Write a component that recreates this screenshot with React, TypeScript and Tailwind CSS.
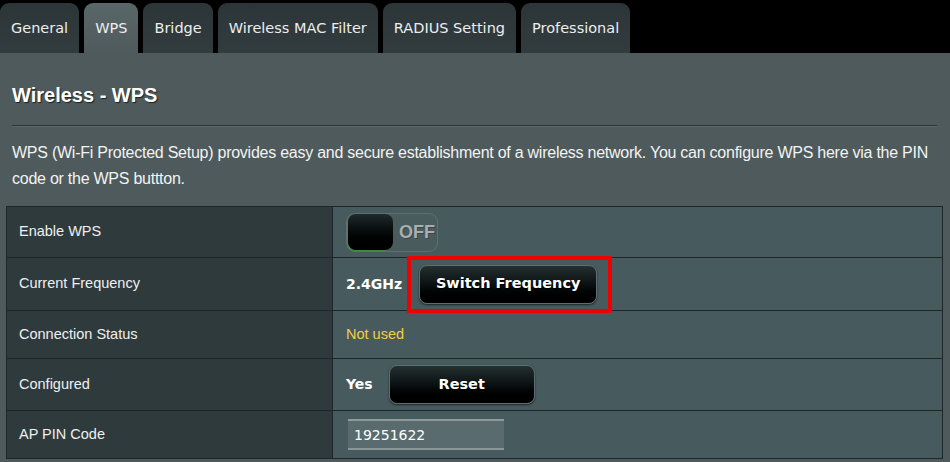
import React from 'react';

const tabs = ['General', 'WPS', 'Bridge', 'Wireless MAC Filter', 'RADIUS Setting', 'Professional'];

const Row: React.FC<{ label: string; h: string; last?: boolean; children?: React.ReactNode }> = ({ label, h, last, children }) => (
    <div className={`flex ${h} ${last ? '' : 'border-b border-[#1d2729]'}`}>
        <div className="w-[326px] shrink-0 bg-[#2f3a3d] border-r border-[#1d2729] flex items-center pl-3 text-[14.5px] text-[#eef0f0]">
            {label}
        </div>
        <div className="flex-1 bg-[#475a5d] flex items-center pl-[13px]">{children}</div>
    </div>
);

const DarkButton: React.FC<{ w: string; children: React.ReactNode }> = ({ w, children }) => (
    <button className={`${w} h-[39px] rounded-[8px] border border-[#5d6d70] bg-gradient-to-b from-[#24302f] via-[#0b1112] to-black text-white font-bold text-[14.5px] [font-family:'DejaVu_Sans',sans-serif] [text-shadow:1px_1px_1px_#000] shadow-[0_1px_2px_rgba(0,0,0,0.6)]`}>
        {children}
    </button>
);

export default function App() {
    return (
        <div className="w-[950px] h-[462px] overflow-hidden bg-[#4e5a5b] font-['Liberation_Sans',Arial,sans-serif]">
            {/* tab strip */}
            <div className="h-[53px] bg-black flex items-end gap-[5px] pt-[3px]">
                {tabs.map(t => (
                    <div
                        key={t}
                        className={`h-[50px] px-[11px] pt-[2px] flex items-center rounded-t-[9px] text-[14.5px] text-[#eceeee] [font-family:'DejaVu_Sans',sans-serif] ${
                            t === 'WPS' ? 'bg-gradient-to-b from-[#5a6769] to-[#4e5a5b]' : 'bg-gradient-to-b from-[#2c3537] to-[#323b3e]'
                        }`}
                    >
                        {t}
                    </div>
                ))}
            </div>

            {/* panel */}
            <div className="pt-[30px]">
                <div className="pl-3 pr-[12px]">
                    <h1 className="text-[20px] leading-[24px] font-bold text-white [text-shadow:1px_1px_1px_#1b2324]">Wireless - WPS</h1>
                    <div className="mt-[18px] mr-[1px] h-[2px] bg-[#2c3638] border-b border-[#5b6869]" />
                    <p className="mt-[13px] -mr-[12px] text-[16px] leading-[26px] tracking-[-0.25px] text-[#f2f3f3]">
                        WPS (Wi-Fi Protected Setup) provides easy and secure establishment of a wireless network. You can configure WPS here via the PIN code or the WPS buttton.
                    </p>
                </div>

                <div className="mt-[14px] ml-[6px] mr-[7px] border border-[#1d2729]">
                    <Row label="Enable WPS" h="h-[51px]">
                        <div className="w-[92px] h-[39px] rounded-[9px] border border-[#5f6e70] bg-[#4a5b5e] flex items-center pl-[1px]">
                            <div className="w-[45px] h-[36px] rounded-[8px] bg-gradient-to-b from-[#202a2c] to-black shadow-[-1px_1px_1px_#4a8a4a]" />
                            <span className="ml-[6px] text-[18px] font-bold text-[#a7afb0] [text-shadow:1px_1px_0_#3a4647]">OFF</span>
                        </div>
                    </Row>
                    <Row label="Current Frequency" h="h-[53px]">
                        <span className="text-[14px] font-bold text-white [font-family:'DejaVu_Sans',sans-serif]">2.4GHz</span>
                        <span className="relative ml-[17px] flex">
                            <DarkButton w="w-[178px]">Switch Frequency</DarkButton>
                            <span className="absolute left-[-12px] right-[-15px] top-[-9px] bottom-[-9px] border-4 border-[#f00000]" />
                        </span>
                    </Row>
                    <Row label="Connection Status" h="h-[48px]">
                        <span className="text-[14.5px] text-[#f3cf45]">Not used</span>
                    </Row>
                    <Row label="Configured" h="h-[52px]">
                        <span className="text-[14px] font-bold text-white [font-family:'DejaVu_Sans',sans-serif]">Yes</span>
                        <span className="ml-[16px] flex">
                            <DarkButton w="w-[146px]">Reset</DarkButton>
                        </span>
                    </Row>
                    <Row label="AP PIN Code" h="h-[47px]" last>
                        <input
                            readOnly
                            value="19251622"
                            className="ml-[2px] w-[156px] h-[31px] bg-[#5a6b6f] border-t-2 border-b-2 border-t-[#8f9c9e] border-b-[#8a9799] px-[6px] text-[14px] text-white outline-none [font-family:'DejaVu_Sans',sans-serif]"
                        />
                    </Row>
                </div>
            </div>
        </div>
    );
}
